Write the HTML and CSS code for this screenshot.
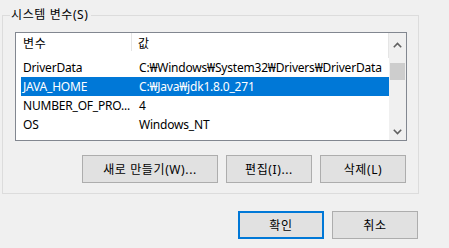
FILE: index.html
```html
<!DOCTYPE html>
<html lang="ko">
<head>
<meta charset="utf-8">
<link rel="stylesheet" href="styles.css">
</head>
<body>
<div class="dialog">
  <fieldset class="group">
    <legend class="group-title">시스템 변수(S)</legend>
    <div class="list">
      <div class="list-view">
        <div class="list-header">
          <div class="hcol hcol-name">변수</div>
          <div class="hcol hcol-value">값</div>
        </div>
        <div class="list-rows">
          <div class="row"><span class="cell cell-name">DriverData</span><span class="cell cell-value">C:₩Windows₩System32₩Drivers₩DriverData</span></div>
          <div class="row selected"><span class="cell cell-name">JAVA_HOME</span><span class="cell cell-value">C:₩Java₩jdk1.8.0_271</span></div>
          <div class="row"><span class="cell cell-name">NUMBER_OF_PRO...</span><span class="cell cell-value">4</span></div>
          <div class="row"><span class="cell cell-name">OS</span><span class="cell cell-value">Windows_NT</span></div>
        </div>
      </div>
      <div class="scrollbar">
        <div class="sb-btn">
          <svg width="9" height="6" viewBox="0 0 9 6"><path d="M0.8 5.2 L4.5 1.5 L8.2 5.2" fill="none" stroke="#606060" stroke-width="1.6"/></svg>
        </div>
        <div class="sb-track"><div class="sb-thumb"></div></div>
        <div class="sb-btn">
          <svg width="9" height="6" viewBox="0 0 9 6"><path d="M0.8 0.8 L4.5 4.5 L8.2 0.8" fill="none" stroke="#606060" stroke-width="1.6"/></svg>
        </div>
      </div>
    </div>
    <div class="actions">
      <button class="btn btn-wide">새로 만들기(W)...</button>
      <button class="btn">편집(I)...</button>
      <button class="btn">삭제(L)</button>
    </div>
  </fieldset>
  <div class="footer">
    <button class="btn btn-default">확인</button>
    <button class="btn">취소</button>
  </div>
</div>
</body>
</html>
```
FILE: styles.css
```css
html, body {
  margin: 0;
  padding: 0;
  background: #f0f0f0;
}
body {
  width: 449px;
  height: 248px;
  overflow: hidden;
  font-family: "Noto Sans", "Noto Sans CJK KR", sans-serif;
  font-size: 12px;
  color: #000;
}
.dialog {
  padding: 0 30px 0 2px;
}
.group {
  margin: 7px 0 0 0;
  padding: 9px 11px 10px 12px;
  border: 1px solid #dcdcdc;
  min-width: 0;
}
.group-title {
  margin-left: -5px;
  padding: 0 2px 0 1px;
  line-height: 16px;
  font-size: 12px;
  letter-spacing: 0.6px;
}
.list {
  display: flex;
  height: 107px;
  border: 1px solid #828790;
  background: #fff;
  overflow: hidden;
}
.list-view {
  flex: 1;
  min-width: 0;
  display: flex;
  flex-direction: column;
}
.list-header {
  display: flex;
  height: 25px;
  flex: none;
}
.hcol {
  line-height: 22px;
  padding-left: 7px;
  box-sizing: border-box;
  position: relative;
  letter-spacing: 0.6px;
}
.hcol-name {
  width: 116px;
}
.hcol-name::after {
  content: "";
  position: absolute;
  right: 0;
  top: 0;
  width: 1px;
  height: 18px;
  background: #e5e5e5;
}
.hcol-value {
  flex: 1;
  padding-left: 6px;
  border-right: 1px solid #e5e5e5;
}
.list-rows {
  padding-left: 5px;
}
.row {
  display: flex;
  height: 19px;
  line-height: 19px;
  white-space: nowrap;
  letter-spacing: -0.2px;
}
.row.selected {
  background: #0078d7;
  color: #fff;
}
.cell-name {
  width: 111px;
  padding-left: 2px;
  box-sizing: border-box;
  overflow: hidden;
}
.cell-value {
  padding-left: 7px;
}
.scrollbar {
  width: 17px;
  flex: none;
  background: #f0f0f0;
  display: flex;
  flex-direction: column;
}
.sb-btn {
  height: 17px;
  display: flex;
  align-items: center;
  justify-content: center;
  flex: none;
}
.sb-btn:first-child {
  padding-top: 3px;
}
.sb-track {
  flex: 1;
}
.sb-thumb {
  margin: 10px 1px 0 1px;
  height: 17px;
  background: #cdcdcd;
}
.actions {
  display: flex;
  justify-content: flex-end;
  gap: 8px;
  margin-top: 14px;
  padding-right: 1px;
}
.btn {
  width: 86px;
  height: 28px;
  margin: 0;
  padding: 0;
  border: 1px solid #adadad;
  background: #e1e1e1;
  font-family: "Noto Sans", "Noto Sans CJK KR", sans-serif;
  font-size: 12px;
  letter-spacing: 0.6px;
  color: #000;
  box-sizing: border-box;
}
.btn-wide {
  width: 136px;
}
.btn-default {
  border: 2px solid #0078d7;
}
.footer {
  display: flex;
  justify-content: flex-end;
  gap: 8px;
  margin-top: 17px;
  padding-right: 1px;
}
```
